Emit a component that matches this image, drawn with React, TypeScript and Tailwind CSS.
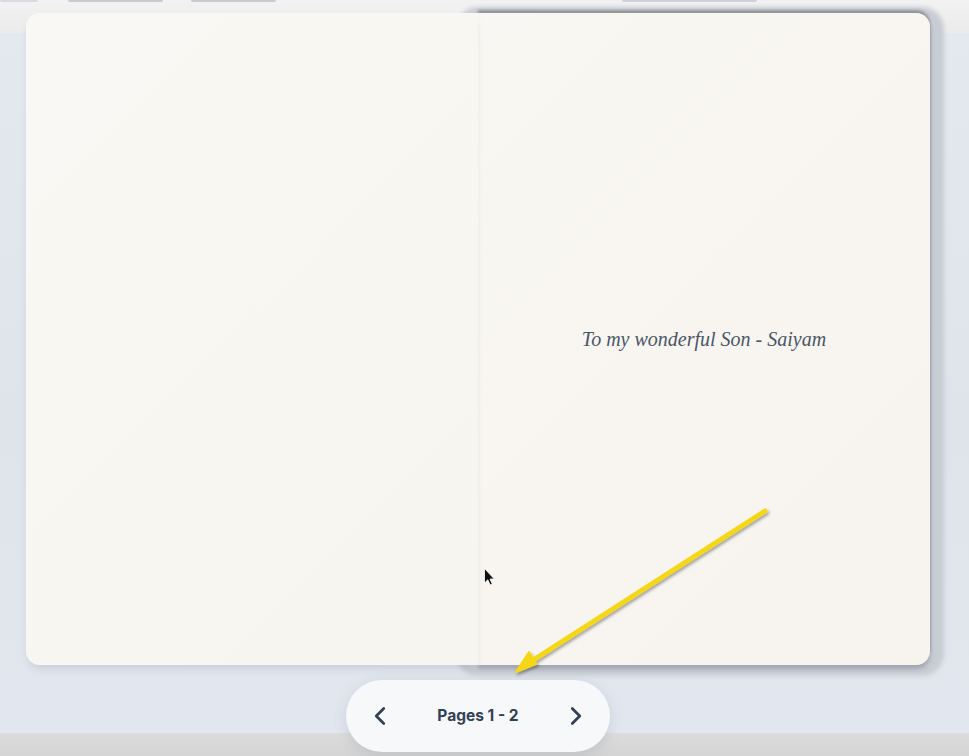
import { ChevronLeft, ChevronRight } from 'lucide-react';

function TopStubs() {
  return (
    <div className="flex h-[2px] w-full">
      <div className="w-[38px] rounded-b-sm bg-[#d9d9de]" />
      <div className="ml-[30px] w-[95px] rounded-b-sm bg-[#c9c9d2]" />
      <div className="ml-[28px] w-[85px] rounded-b-sm bg-[#c9c9d2]" />
      <div className="ml-[346px] w-[135px] rounded-b-sm bg-[#d0d0d8]" />
    </div>
  );
}

function Annotation() {
  return (
    <svg className="pointer-events-none absolute left-0 top-0" width="969" height="756" viewBox="0 0 969 756">
      <defs>
        <filter id="sh" x="-20%" y="-20%" width="140%" height="140%">
          <feDropShadow dx="1.5" dy="2" stdDeviation="1.5" floodColor="#000" floodOpacity="0.35" />
        </filter>
      </defs>
      <g filter="url(#sh)">
        <line x1="765" y1="511" x2="524" y2="666" stroke="#f5d714" strokeWidth="5" strokeLinecap="round" />
        <path d="M516 672 L529 652 L536 664 Z" fill="#f5d714" stroke="#f5d714" strokeWidth="2" strokeLinejoin="round" />
      </g>
      {/* mouse pointer */}
      <path d="M484.5 568.5 L484.5 583 L487.8 579.8 L490.2 585 L492.3 584.1 L490 579 L494.3 579 Z" fill="#111" stroke="#fff" strokeWidth="0.8" />
    </svg>
  );
}

export default function App() {
  return (
    <div className="relative h-[756px] w-[969px] overflow-hidden bg-[linear-gradient(to_bottom,#f2f2f3_0px,#ebebec_33px,#e4e8ef_33px,#dfe3ea_420px,#e2e6ee_733px,#dcdcdc_733px,#d4d4d4_756px)] font-['Inter',sans-serif]">
      <TopStubs />
      <div className="ml-[26px] mt-[11px] flex h-[652px] w-[904px]">
        <div className="relative z-10 h-full w-[452px] rounded-l-[14px] bg-[linear-gradient(135deg,#faf8f4,#f7f5f0)] shadow-[0_6px_8px_-3px_rgba(120,130,150,0.25)]" />
        <div className="relative h-full w-[452px]">
          <div className="absolute -bottom-[11px] -left-[22px] -right-[14px] -top-[6px] rounded-[22px] bg-[#c8ccd3] blur-[2px]" />
          <div className="relative flex h-full w-full items-center justify-center rounded-r-[14px] bg-[linear-gradient(135deg,#f9f7f3,#f7f4ee)] shadow-[0_-3px_3px_rgba(0,0,0,0.28),0_4px_4px_rgba(60,70,90,0.28)]">
            <p className="font-['Liberation_Serif',serif] text-[20px] italic text-[#4b5566]">To my wonderful Son - Saiyam</p>
          </div>
        </div>
      </div>
      <div className="ml-[346px] mt-[15px] flex h-[72px] w-[264px] items-center justify-between rounded-full bg-[#f7f8fa] px-[19px] shadow-[0_4px_14px_rgba(100,110,130,0.18)]">
        <ChevronLeft className="h-[30px] w-[30px] text-[#334155]" strokeWidth={2.2} />
        <span className="text-[15.5px] font-bold text-[#334155]">Pages 1 - 2</span>
        <ChevronRight className="h-[30px] w-[30px] text-[#334155]" strokeWidth={2.2} />
      </div>
      <Annotation />
    </div>
  );
}
